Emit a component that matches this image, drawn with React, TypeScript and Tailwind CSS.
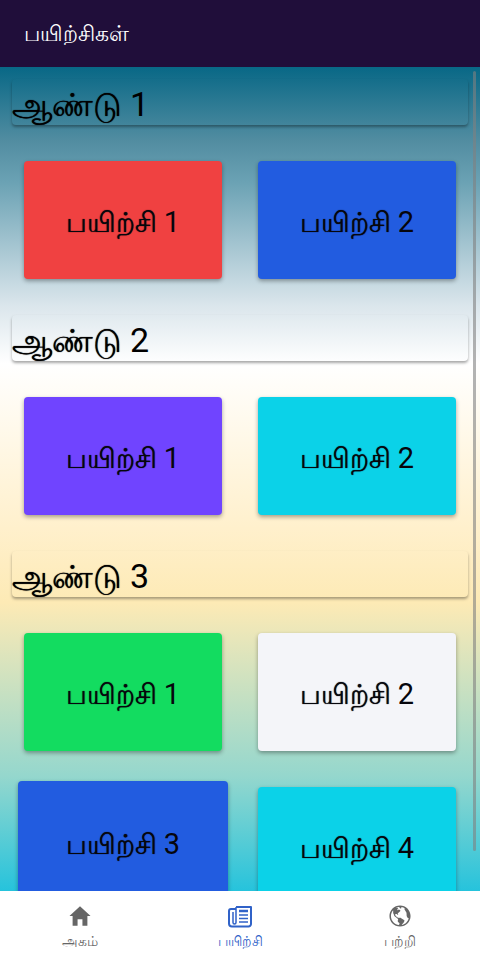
import { IoMdHome, IoMdGlobe } from "react-icons/io";

type Lesson = { number: number; color: string; pressed?: boolean };
type Year = { number: number; lessons: Lesson[] };

const years: Year[] = [
  {
    number: 1,
    lessons: [
      { number: 1, color: "bg-[#f04141]" },
      { number: 2, color: "bg-[#225ce0]" },
    ],
  },
  {
    number: 2,
    lessons: [
      { number: 1, color: "bg-[#7044ff]" },
      { number: 2, color: "bg-[#0bd2e8]" },
    ],
  },
  {
    number: 3,
    lessons: [
      { number: 1, color: "bg-[#13dc60]" },
      { number: 2, color: "bg-[#f4f5f9]" },
      { number: 3, color: "bg-[#225ce0]", pressed: true },
      { number: 4, color: "bg-[#0bd2e8]" },
    ],
  },
];

function NewspaperIcon({ size }: { size: number }) {
  return (
    <svg width={size} height={size} viewBox="0 0 26 26" fill="none" stroke="currentColor" strokeWidth="2" strokeLinejoin="round">
      <path d="M9 4h15v17a2.5 2.5 0 0 1-2.5 2.5H5A3 3 0 0 1 2 20.500V8a2 2 0 0 1 2-2h5" />
      <path d="M9 4v15.500c0 1-.5 1.500-1.500 1.500S6 20.500 6 19.500V9" strokeWidth="1.500" />
      <path d="M12 8h9" strokeWidth="2.500" />
      <path d="M12 12h9M12 15.500h9M12 19h9" strokeWidth="1.500" />
    </svg>
  );
}

const tabs = [
  { label: "அகம்", Icon: IoMdHome, active: false },
  { label: "பயிற்சி", Icon: NewspaperIcon, active: true },
  { label: "பற்றி", Icon: IoMdGlobe, active: false },
];

function LessonCard({ number, color, pressed }: Lesson) {
  return (
    <button
      type="button"
      className={`rounded-[4px] text-[28px] leading-8 text-[#06060c] shadow-[0_2px_4px_rgba(0,0,0,0.35)] ${color} ${
        pressed ? "-mx-1.5 -mt-1.5 h-[130px] pb-1" : "h-[118px] pt-1"
      }`}
    >
      <span className="[text-shadow:0_0_1px_currentColor]">பயிற்சி</span> <span className="text-[29px]">{number}</span>
    </button>
  );
}

export default function App() {
  return (
    <div className="flex h-screen flex-col overflow-hidden font-[Roboto,'Noto_Sans',sans-serif]">
      <header className="flex h-[67px] shrink-0 items-center bg-[#200e3a] px-6">
        <h1 className="text-[22px] text-white">பயிற்சிகள்</h1>
      </header>
      <main className="relative min-h-0 flex-1 overflow-hidden bg-[linear-gradient(180deg,#086886_0%,#528da1_9%,#6ba2b4_14%,#dbe6ec_29%,#ffffff_36%,#fff0cc_56%,#fdeab5_65%,#95d7cd_86%,#26c3dc_100%)] pt-3">
        {years.map((year) => (
          <section key={year.number}>
            <h2 className="mx-3 flex h-[46px] items-center rounded-[4px] pt-1 text-[32px] leading-10 text-black shadow-[0_2px_3px_rgba(0,0,0,0.35)]">
              <span>
                <span className="[text-shadow:0_0_1px_currentColor]">ஆண்டு</span> <span className="text-[34px]">{year.number}</span>
              </span>
            </h2>
            <div className="grid grid-cols-2 gap-9 px-6 py-9">
              {year.lessons.map((lesson) => (
                <LessonCard key={lesson.number} {...lesson} />
              ))}
            </div>
          </section>
        ))}
        <div className="absolute top-1 right-1 bottom-10 w-[3px] rounded-full bg-[#808080]/60" />
      </main>
      <nav className="grid h-[69px] shrink-0 grid-cols-3 bg-white">
        {tabs.map(({ label, Icon, active }) => (
          <button
            key={label}
            type="button"
            className={`flex flex-col items-center pt-3 text-[14px] leading-6 ${active ? "text-[#3062c8]" : "text-[#666666]"}`}
          >
            <Icon size={26} />
            {label}
          </button>
        ))}
      </nav>
    </div>
  );
}
